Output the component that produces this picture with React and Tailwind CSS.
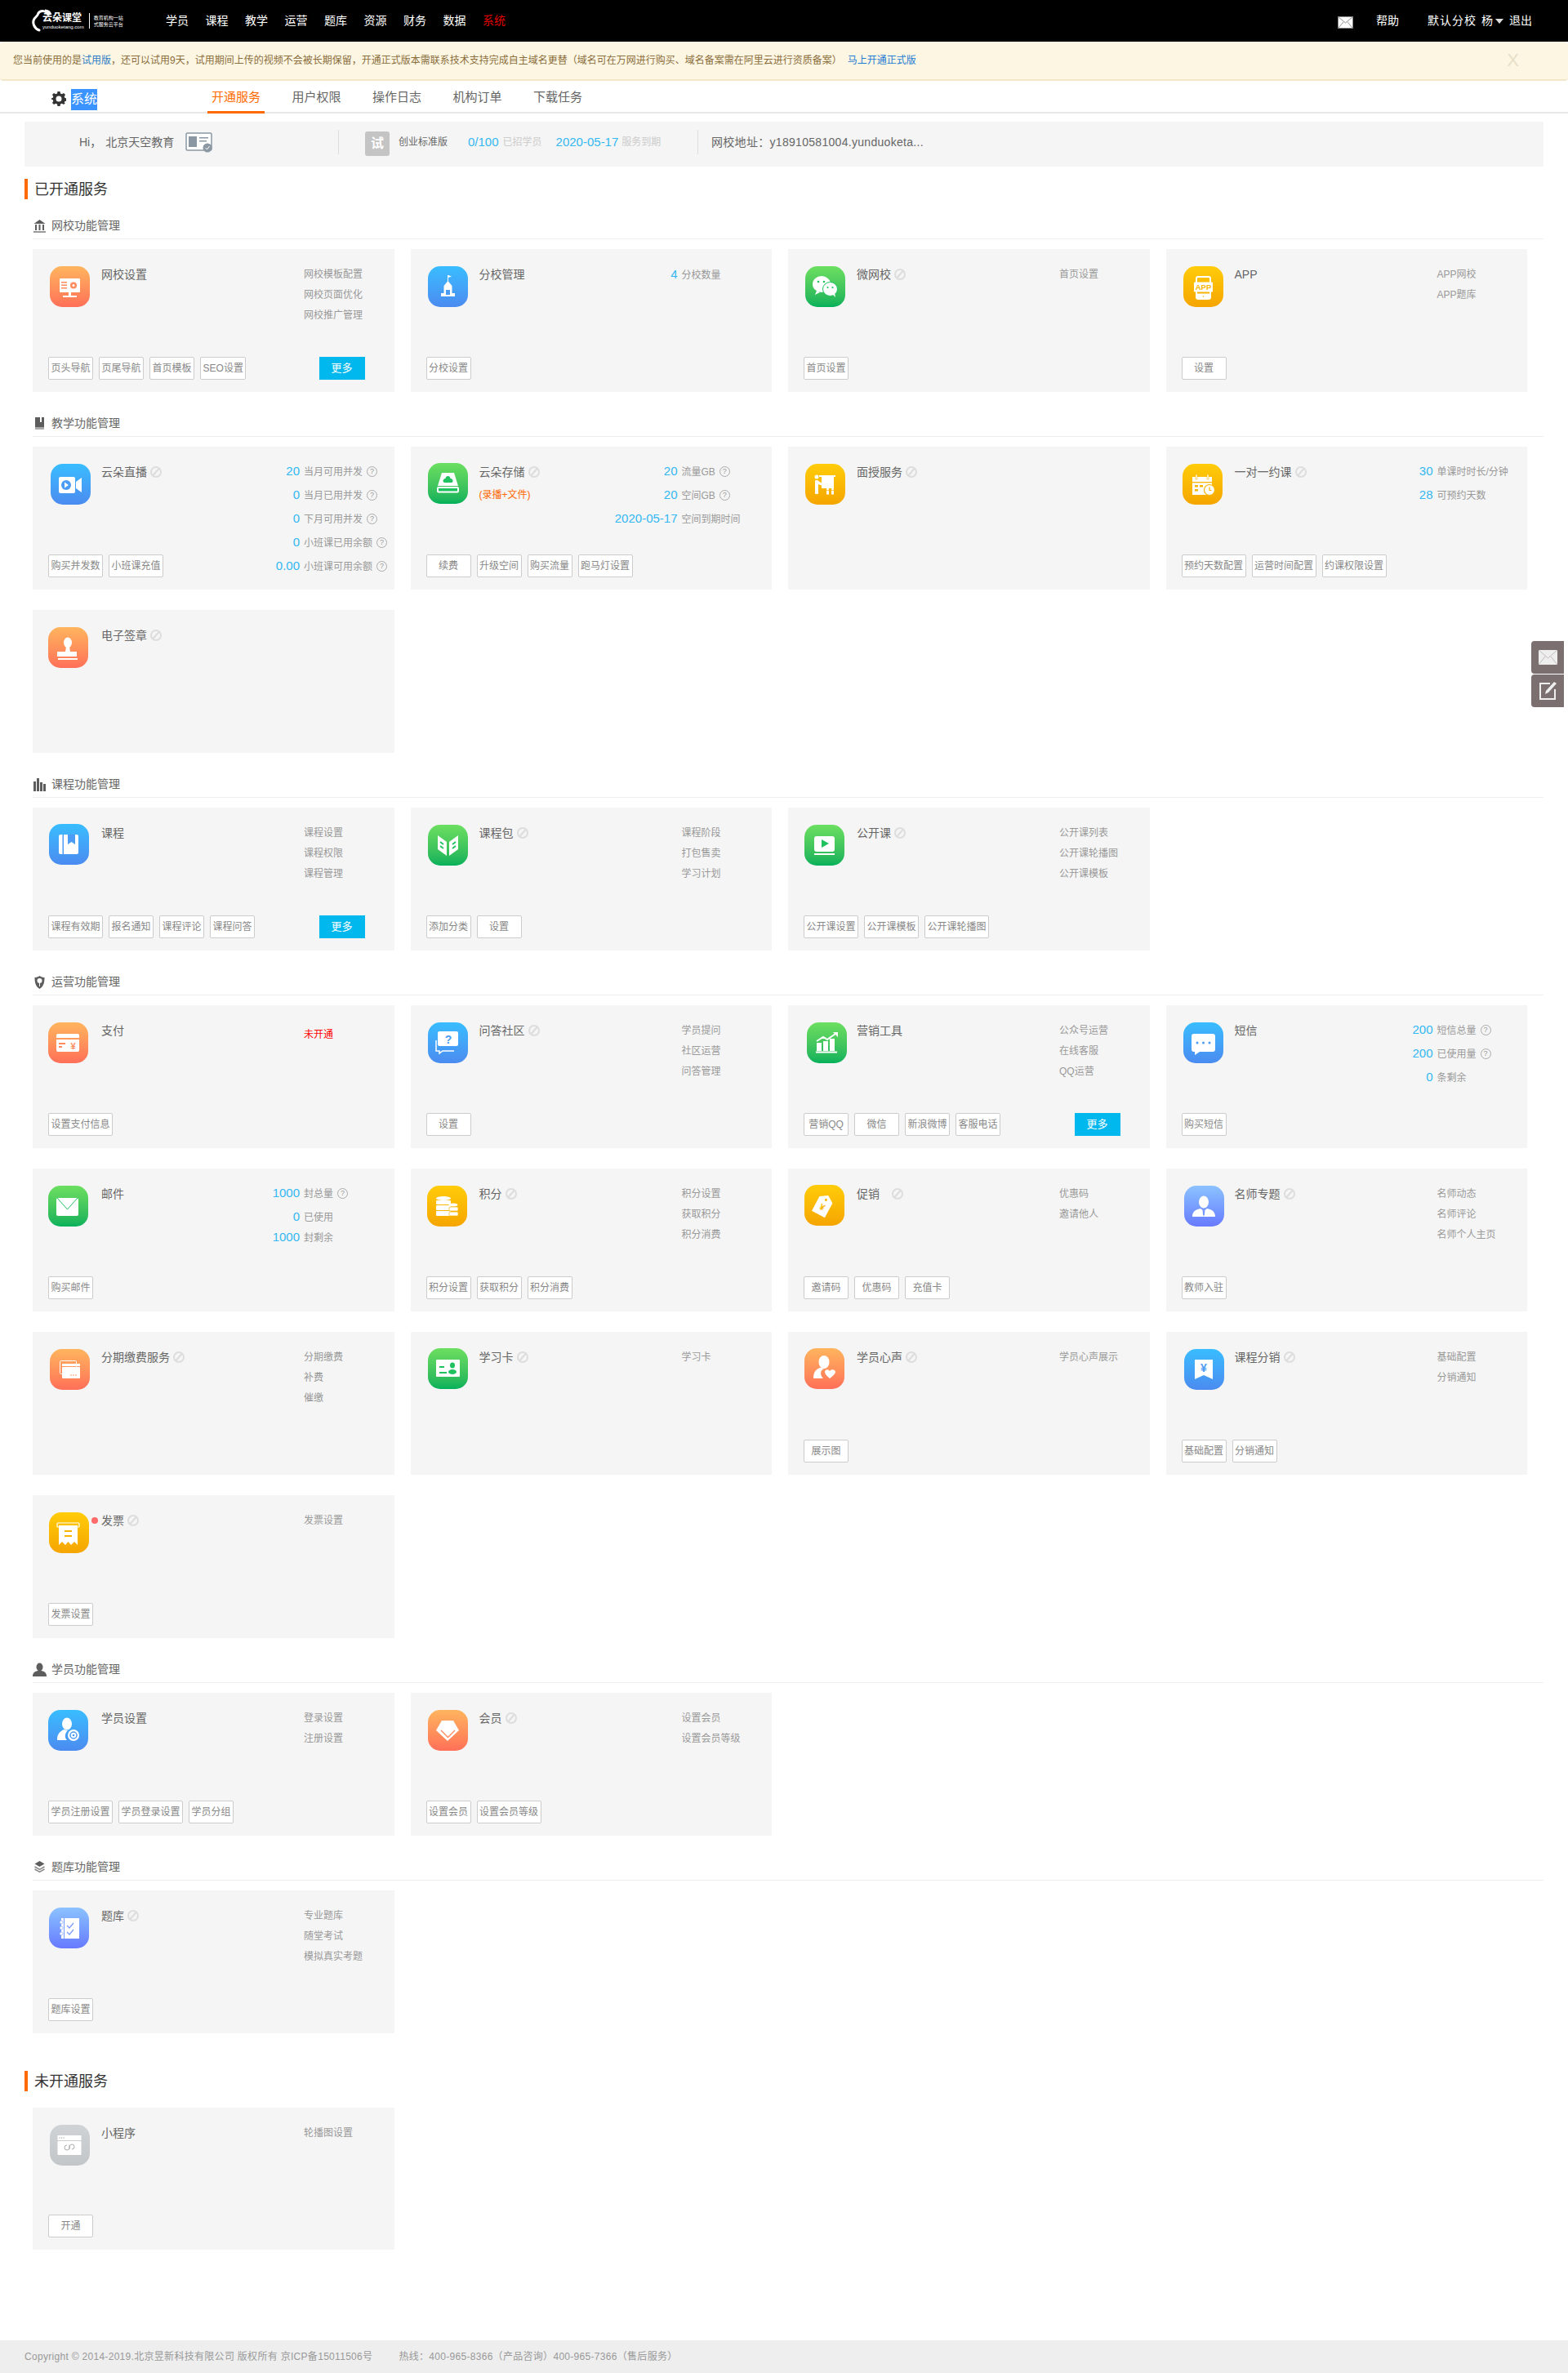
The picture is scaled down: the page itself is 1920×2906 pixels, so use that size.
import React from "react";

const GR = {
  orange: "bg-linear-to-b from-[#ffb45e] to-[#ff6f58]",
  blue: "bg-linear-to-b from-[#38bdff] to-[#4a8bf0]",
  green: "bg-linear-to-b from-[#6bdf60] to-[#00b15a]",
  yellow: "bg-linear-to-b from-[#ffcc0a] to-[#f5a500]",
  peri: "bg-linear-to-b from-[#8cc2ff] to-[#6879ff]",
  gray: "bg-linear-to-b from-[#d0d3d5] to-[#c3c6c8]",
};
const AC = { orange: "#ff8a5c", blue: "#4a9cf5", green: "#1fc25f", yellow: "#f7b500", peri: "#7a9cff", gray: "#c4c7c9" };

function Glyph({ n, a }) {
  const W = "#fff";
  switch (n) {
    case "site":
      return (<g fill={W}><rect x="12" y="15" width="25" height="17" rx="1" /><rect x="23" y="32" width="3" height="4" /><rect x="16" y="36" width="17" height="2" /><g fill={a}><rect x="14" y="19" width="7" height="1.5" /><rect x="14" y="22.5" width="7" height="1.5" /><rect x="14" y="26" width="7" height="1.5" /><circle cx="29" cy="23.5" r="4" /></g><circle cx="29" cy="23.5" r="1.5" /></g>);
    case "school":
      return (<g fill={W}><rect x="24" y="11" width="1" height="8" /><path d="M25 11l4 1.5-4 1.5z" /><path d="M24.5 18l5 6v9h3.5v4H16v-4h3.5v-9z" /><rect x="22" y="29" width="5" height="6" fill={a} /></g>);
    case "wechat":
      return (<g><ellipse cx="20" cy="22" rx="11" ry="10" fill={W} /><path d="M14 30l-2 5 6-3z" fill={W} /><circle cx="16" cy="19" r="1.3" fill={a} /><circle cx="23" cy="19" r="1.3" fill={a} /><ellipse cx="30.5" cy="28" rx="9" ry="8.5" fill={W} stroke={a} strokeWidth="1" /><path d="M34 35l3 3-1-5z" fill={W} /><circle cx="27.5" cy="26" r="1.1" fill={a} /><circle cx="33.5" cy="26" r="1.1" fill={a} /></g>);
    case "app":
      return (<g><rect x="16" y="13" width="17" height="27" rx="2" fill="none" stroke={W} strokeWidth="2" /><rect x="13" y="19.5" width="23" height="12" rx="1" fill={W} /><text x="24.5" y="29" textAnchor="middle" fontSize="9.5" fontWeight="700" fill={a} fontFamily="Liberation Sans">APP</text><rect x="16" y="33.5" width="17" height="6" fill={W} /><circle cx="24.5" cy="37" r="0.8" fill={a} /></g>);
    case "video":
      return (<g><rect x="10" y="16" width="20" height="20" rx="2" fill={W} /><circle cx="19" cy="26" r="6" fill={a} /><path d="M17 22.5l5 3.5-5 3.5z" fill={W} /><path d="M31 22l7-5v18l-7-5z" fill={W} /></g>);
    case "store":
      return (<g><path d="M17 12h15l5 16H12z" fill={W} /><path d="M24.5 16c2 0 3 1.5 3 3 2 0 3 1.5 3 3s-1 2-2 2h-8c-1 0-2-1-2-2s1-3 3-3c0-1.5 1-3 3-3z" fill={a} /><rect x="11" y="29" width="27" height="7.5" rx="2" fill={W} /><rect x="13" y="31" width="23" height="3.5" fill={a} /></g>);
    case "teach":
      return (<g fill={W}><circle cx="14" cy="16" r="2.5" /><rect x="12" y="20" width="4" height="17" rx="1" /><rect x="17" y="14" width="20" height="2" /><rect x="20" y="16" width="15" height="14" /><circle cx="27.5" cy="31" r="1.5" /><circle cx="33.5" cy="31" r="1.5" /><rect x="26" y="33" width="3" height="4.5" /><rect x="32" y="33" width="3" height="4.5" /><path d="M16 21l5 3 2-3 1 1-3 5-5-2z" /></g>);
    case "calendar":
      return (<g><rect x="12" y="16" width="24" height="22" fill={W} /><rect x="12" y="22" width="24" height="1.3" fill={a} /><rect x="16" y="13" width="2" height="6" fill={W} stroke={a} strokeWidth="0.6" /><rect x="30" y="13" width="2" height="6" fill={W} stroke={a} strokeWidth="0.6" /><rect x="15" y="26" width="4" height="2.5" fill={a} /><rect x="21" y="26" width="4" height="2.5" fill={a} /><rect x="15" y="31" width="4" height="2.5" fill={a} /><circle cx="33" cy="32" r="6.5" fill={W} stroke={a} strokeWidth="1.2" /><path d="M33 28.5v4h2.5" stroke={a} strokeWidth="1.2" fill="none" /></g>);
    case "stamp":
      return (<g fill={W}><ellipse cx="24" cy="19" rx="5" ry="6.5" /><path d="M22 24h4l1 6h-6z" /><path d="M14 30h21v6H11v-6z" /><rect x="12" y="38" width="24" height="2" /></g>);
    case "book":
      return (<g><rect x="12" y="13" width="24" height="24" rx="2" fill={W} /><rect x="16.5" y="13" width="1.5" height="24" fill={a} /><path d="M23 13h9v12l-4.5-3-4.5 3z" fill={a} /></g>);
    case "pack":
      return (<g><path d="M12 13l11 8v17l-11-8z" fill={W} /><path d="M37 13l-11 8v17l11-8z" fill={W} /><path d="M15 21l4 3M15 26l4 3M34 21l-4 3M34 26l-4 3" stroke={a} strokeWidth="1.8" /></g>);
    case "play":
      return (<g><rect x="12" y="14" width="25" height="19" rx="3" fill={W} /><path d="M21 18l9 5-9 5z" fill={a} /><rect x="12" y="35" width="25" height="2" fill={W} /></g>);
    case "pay":
      return (<g><path d="M10 16a2 2 0 012-2h24a2 2 0 012 2v3H10z" fill={W} /><path d="M10 21h28v13a2 2 0 01-2 2H12a2 2 0 01-2-2z" fill={W} /><rect x="13" y="25" width="8" height="2" fill={a} /><rect x="13" y="29" width="4" height="2" fill={a} /><text x="30.5" y="33" textAnchor="middle" fontSize="11" fontWeight="700" fill={a} fontFamily="Liberation Sans">¥</text></g>);
    case "qa":
      return (<g><path d="M10 22v13h4v3l4-3h14" fill="none" stroke={W} strokeWidth="1.5" /><path d="M14 11h21a2 2 0 012 2v14a2 2 0 01-2 2H14a2 2 0 01-2-2V13a2 2 0 012-2z" fill={W} /><text x="25" y="26" textAnchor="middle" fontSize="14" fontWeight="700" fill={a} fontFamily="Liberation Sans">?</text></g>);
    case "chart":
      return (<g><g fill={W}><rect x="12" y="25" width="6" height="10" /><rect x="20" y="23" width="6" height="12" /><rect x="28" y="20" width="6" height="15" /><rect x="11" y="35.5" width="26" height="2" /><path d="M32 12h6v6z" /></g><path d="M12 23l8-5 5 3 10-7" fill="none" stroke={W} strokeWidth="2" /></g>);
    case "sms":
      return (<g><path d="M13 14h23a3 3 0 013 3v16a3 3 0 01-3 3H20l-6 4v-4h-1a3 3 0 01-3-3V17a3 3 0 013-3z" fill={W} /><circle cx="17" cy="25" r="1.5" fill={a} /><circle cx="24.5" cy="25" r="1.5" fill={a} /><circle cx="32" cy="25" r="1.5" fill={a} /></g>);
    case "mail":
      return (<g><rect x="10" y="15" width="27" height="22" rx="2" fill={W} /><path d="M11 15l12.5 14L36 15" fill="none" stroke={a} strokeWidth="1" /></g>);
    case "coins":
      return (<g fill={W}><ellipse cx="20" cy="15.5" rx="9" ry="2.5" /><rect x="11" y="18" width="18" height="5" rx="1" /><rect x="11" y="24" width="18" height="6" rx="1" /><rect x="11" y="31" width="18" height="6" rx="1" /><ellipse cx="32" cy="23.5" rx="5.5" ry="2" /><rect x="27" y="26" width="11" height="5" rx="1" stroke={a} strokeWidth="0.7" /><rect x="27" y="32" width="11" height="5" rx="1" stroke={a} strokeWidth="0.7" /></g>);
    case "tag":
      return (<g transform="rotate(28 24 25)"><path d="M14 18l9-6 9 6v20H14z" fill={W} /><circle cx="23" cy="18" r="1.5" fill={a} /><text x="23" y="32" textAnchor="middle" fontSize="11" fontWeight="700" fill={a} fontFamily="Liberation Sans">¥</text></g>);
    case "teacher":
      return (<g><ellipse cx="24" cy="20" rx="6" ry="7.5" fill={W} /><path d="M10 38c0-7 5-9 10-10l4 3 4-3c5 1 10 3 10 10z" fill={W} /><path d="M22.5 29.5h3l-.5 6-1 2-1-2z" fill={a} /></g>);
    case "cards":
      return (<g><rect x="12.5" y="14.5" width="20" height="16" rx="1" fill="none" stroke={W} /><rect x="15" y="18" width="22" height="3" fill={W} /><rect x="15" y="22" width="22" height="14" rx="1" fill={W} /><circle cx="26" cy="32" r=".8" fill={a} /><circle cx="29" cy="32" r=".8" fill={a} /><circle cx="32" cy="32" r=".8" fill={a} /></g>);
    case "idcard":
      return (<g><rect x="10" y="14" width="29" height="21" rx="1" fill={W} /><rect x="14" y="22" width="6" height="2" fill={a} /><rect x="14" y="29" width="9" height="2" fill={a} /><ellipse cx="30" cy="21" rx="3" ry="3.5" fill={a} /><ellipse cx="30" cy="29" rx="5" ry="3" fill={a} /></g>);
    case "voice":
      return (<g fill={W}><ellipse cx="24" cy="17" rx="6.5" ry="8" /><path d="M11 37c0-8 3-11 8-13 4 0 5 1 5 1-5 2-5 8-1 12z" /><path d="M31 37c-4-3-6-6-6-8 0-3 4-4 6-1 2-3 7-2 7 1 0 2-3 5-7 8z" /></g>);
    case "ribbon":
      return (<g><path d="M13 13h22v24l-11-5-11 5z" fill={W} /><text x="24" y="28" textAnchor="middle" fontSize="14" fontWeight="700" fill={a} fontFamily="Liberation Sans">¥</text></g>);
    case "invoice":
      return (<g><rect x="10" y="13" width="27" height="5" rx="1" fill="none" stroke={W} strokeWidth="1.2" /><path d="M12 16h23v24l-4-4-4 4-3.5-4-3.5 4-4-4-4 4z" fill={W} /><rect x="19" y="22" width="9" height="2" fill={a} /><rect x="19" y="28" width="9" height="2" fill={a} /></g>);
    case "usergear":
      return (<g><ellipse cx="23" cy="17" rx="6" ry="7.5" fill={W} /><path d="M11 37c0-8 3-10 8-13l5 1c-4 4-4 9-1 12z" fill={W} /><circle cx="31" cy="31" r="7" fill={W} /><circle cx="31" cy="31" r="4" fill="none" stroke={a} strokeWidth="1.5" /><circle cx="31" cy="31" r="1.3" fill={a} /></g>);
    case "vip":
      return (<g><path d="M17 13h14l7 12-14 13-14-13z" fill={W} /><path d="M16 25l8.5 8.5L33 25" fill="none" stroke={a} strokeWidth="1.3" /></g>);
    case "exam":
      return (<g><rect x="15" y="13" width="22" height="25" fill={W} /><rect x="18" y="13" width="1" height="25" fill={a} /><circle cx="15" cy="18" r="2" fill={W} stroke={a} strokeWidth=".6" /><circle cx="15" cy="25" r="2" fill={W} stroke={a} strokeWidth=".6" /><circle cx="15" cy="32" r="2" fill={W} stroke={a} strokeWidth=".6" /><path d="M22 22l3 3 5-6M22 30l3 3 5-6" fill="none" stroke={a} strokeWidth="1.3" /></g>);
    case "mini":
      return (<g><rect x="9.5" y="13" width="29" height="6" fill={W} /><rect x="9.5" y="20" width="29" height="17" rx="1" fill={W} /><circle cx="12" cy="16" r=".7" fill="#aaa" /><circle cx="14.5" cy="16" r=".7" fill="#aaa" /><circle cx="17" cy="16" r=".7" fill="#aaa" /><path d="M24 25v3a3 3 0 11-3-3M24 30v-3a3 3 0 113 3" fill="none" stroke="#aaa" strokeWidth="1" /></g>);
    default:
      return null;
  }
}

function AppIcon({ n, c, ic }) {
  return (
    <div className={`w-[49px] h-[50px] rounded-[15px] ${GR[c]} ${ic}`}>
      <svg width="49" height="50" viewBox="0 0 49 50"><Glyph n={n} a={AC[c]} /></svg>
    </div>
  );
}

function Off() {
  return (
    <svg width="14" height="14" viewBox="0 0 14 14" className="shrink-0">
      <circle cx="7" cy="7" r="6" fill="none" stroke="#ddd" strokeWidth="2" />
      <path d="M3.5 11L10.5 3" stroke="#ddd" strokeWidth="2" />
    </svg>
  );
}
function Q() {
  return (
    <span className="ml-[5px] inline-flex w-[13px] h-[13px] items-center justify-center rounded-full border border-[#aaa] text-[9px] leading-none text-[#999]">?</span>
  );
}

function Btn({ t }) {
  return (
    <span className="inline-flex h-[28px] min-w-[55px] items-center justify-center rounded-[2px] border border-[#ccc] bg-white px-[2.5px] text-[12px] text-[#888] whitespace-nowrap">{t}</span>
  );
}

function Card({ d }) {
  const { t, off, sub, n, c, ic = "ml-[21px]", list, stats, btns = [], more, red, dot, gap } = d;
  return (
    <div className={`mr-[20px] flex flex-col bg-[#f5f5f5] pt-[21px] pb-[15px] ${d.h || "h-[175px]"}`}>
      <div className="grid h-0 flex-1 grid-cols-[84px_148px_1fr]">
        <div><AppIcon n={n} c={c} ic={ic} /></div>
        <div>
          <div className={`relative -mt-[1px] flex h-[22px] items-center text-[14px] text-[#666] whitespace-nowrap ${gap || "gap-[4px]"}`}>
            {dot && <span className="absolute left-[-12px] top-[7px] h-[8px] w-[8px] rounded-full bg-[#ff6b6b]" />}
            <span>{t}</span>
            {off && <Off />}
          </div>
          {sub && <div className="mt-[6px] h-[22px] text-[12px] leading-[22px] text-[#ff6600] whitespace-nowrap">{sub}</div>}
        </div>
        <div>
          {list && (
            <div className="-mt-[2px] pl-[100px]">
              {list.map((x) => (
                <div key={x} className="h-[25px] text-[12px] leading-[25px] text-[#999] whitespace-nowrap">{x}</div>
              ))}
            </div>
          )}
          {red && <div className="mt-[4px] pl-[100px] text-[12px] leading-[22px] text-[#f00]">{red}</div>}
          {stats && (
            <div className="-mt-[5px]">
              {stats.map((r) => (
                <div key={r[1]} className={`flex items-center whitespace-nowrap ${r[3] || "h-[29px]"}`}>
                  <span className="w-[100px] pr-[5px] text-right text-[15px] text-[#33b8f2]">{r[0]}</span>
                  <span className="text-[12px] text-[#999]">{r[1]}</span>
                  {r[2] && <Q />}
                </div>
              ))}
            </div>
          )}
        </div>
      </div>
      {btns.length > 0 && (
        <div className="flex gap-[7px] pl-[19px] pr-[36px]">
          {btns.map((b, i) => <Btn key={b + i} t={b} />)}
          {more && <span className="ml-auto flex h-[28px] w-[56px] items-center justify-center bg-[#00b7ee] text-[13px] text-white">更多</span>}
        </div>
      )}
    </div>
  );
}

const IC = "#5d5d5d";
const HeadIcons = {
  bank: (<g fill={IC}><path d="M8.5 1l7 5H1.5z" /><rect x="3" y="7" width="2" height="7" /><rect x="7.5" y="7" width="2" height="7" /><rect x="12" y="7" width="2" height="7" /><rect x="1" y="15" width="15" height="2" fill="#999" /></g>),
  book: (<g><rect x="3" y="1" width="11" height="12" fill={IC} /><rect x="9" y="1" width="2" height="6" fill="#fff" /><rect x="3" y="13" width="11" height="3" fill="#aaa" /></g>),
  books: (<g fill={IC}><rect x="1" y="5" width="3" height="12" /><rect x="5" y="1" width="3" height="16" /><rect x="9" y="6" width="3" height="11" /><rect x="13" y="8" width="3" height="9" /></g>),
  shield: (<g><path d="M8.5 1c2 1.5 4 2 6 2 0 6-1 11-6 14-5-3-6-8-6-14 2 0 4-.5 6-2z" fill={IC} /><circle cx="8.5" cy="7" r="3" fill="#fff" /><path d="M8 10h1v4H8z" fill="#fff" /></g>),
  person: (<g fill={IC}><ellipse cx="8.5" cy="5.5" rx="4" ry="5" /><path d="M0 17c0-5 3-6 6-7h5c3 1 6 2 6 7z" /></g>),
  layers: (<g><path d="M8.5 1l6 3.5-6 3.5-6-3.5z" fill={IC} /><path d="M2.5 8l6 3.5 6-3.5M2.5 11l6 3.5 6-3.5" fill="none" stroke="#888" strokeWidth="1.5" /></g>),
};

function Group({ icon, title, cards }) {
  return (
    <div className="mb-[25px] ml-[40px] w-[1850px]">
      <div className="flex h-[30px] items-center gap-[6px] border-b border-[#eee] pb-[2px] text-[14px] text-[#666]">
        <svg width="17" height="17" viewBox="0 0 17 17">{HeadIcons[icon]}</svg>
        <span>{title}</span>
      </div>
      <div className="mt-[12px] grid grid-cols-4 gap-y-[25px]">
        {cards.map((d) => <Card key={d.t} d={d} />)}
      </div>
    </div>
  );
}

function Title({ children, cls }) {
  return (
    <div className={`ml-[30px] flex h-[25px] items-center border-l-[4px] border-[#ff6a00] pl-[8px] pt-[2px] text-[18px] text-[#333] ${cls}`}>{children}</div>
  );
}

const G1 = [
  { t: "网校设置", n: "site", c: "orange", list: ["网校模板配置", "网校页面优化", "网校推广管理"], btns: ["页头导航", "页尾导航", "首页模板", "SEO设置"], more: true },
  { t: "分校管理", n: "school", c: "blue", stats: [["4", "分校数量", false, "h-[31px]"]], btns: ["分校设置"] },
  { t: "微网校", off: true, n: "wechat", c: "green", list: ["首页设置"], btns: ["首页设置"] },
  { t: "APP", n: "app", c: "yellow", list: ["APP网校", "APP题库"], btns: ["设置"] },
];
const G2 = [
  { t: "云朵直播", off: true, n: "video", c: "blue", ic: "ml-[22px]", stats: [["20", "当月可用并发", 1], ["0", "当月已用并发", 1], ["0", "下月可用并发", 1], ["0", "小班课已用余额", 1], ["0.00", "小班课可用余额", 1]], btns: ["购买并发数", "小班课充值"] },
  { t: "云朵存储", off: true, sub: "(录播+文件)", n: "store", c: "green", ic: "-mt-[1px] ml-[21px]", stats: [["20", "流量GB", 1], ["20", "空间GB", 1], ["2020-05-17", "空间到期时间"]], btns: ["续费", "升级空间", "购买流量", "跑马灯设置"] },
  { t: "面授服务", off: true, n: "teach", c: "yellow" },
  { t: "一对一约课", off: true, n: "calendar", c: "yellow", ic: "ml-[20px]", stats: [["30", "单课时时长/分钟"], ["28", "可预约天数"]], btns: ["预约天数配置", "运营时间配置", "约课权限设置"] },
  { t: "电子签章", off: true, n: "stamp", c: "orange", ic: "ml-[19px]" },
];
const G3 = [
  { t: "课程", n: "book", c: "blue", ic: "-mt-[1px] ml-[20px]", list: ["课程设置", "课程权限", "课程管理"], btns: ["课程有效期", "报名通知", "课程评论", "课程问答"], more: true },
  { t: "课程包", off: true, n: "pack", c: "green", list: ["课程阶段", "打包售卖", "学习计划"], btns: ["添加分类", "设置"] },
  { t: "公开课", off: true, n: "play", c: "green", ic: "ml-[20px]", list: ["公开课列表", "公开课轮播图", "公开课模板"], btns: ["公开课设置", "公开课模板", "公开课轮播图"] },
];
const G4 = [
  { t: "支付", n: "pay", c: "orange", ic: "ml-[19px]", red: "未开通", btns: ["设置支付信息"] },
  { t: "问答社区", off: true, n: "qa", c: "blue", list: ["学员提问", "社区运营", "问答管理"], btns: ["设置"] },
  { t: "营销工具", n: "chart", c: "green", ic: "ml-[23px]", list: ["公众号运营", "在线客服", "QQ运营"], btns: ["营销QQ", "微信", "新浪微博", "客服电话"], more: true },
  { t: "短信", n: "sms", c: "blue", stats: [["200", "短信总量", 1], ["200", "已使用量", 1], ["0", "条剩余"]], btns: ["购买短信"] },
  { t: "邮件", n: "mail", c: "green", ic: "ml-[19px]", stats: [["1000", "封总量", 1], ["0", "已使用"], ["1000", "封剩余", false, "h-[21px]"]], btns: ["购买邮件"] },
  { t: "积分", off: true, n: "coins", c: "yellow", ic: "ml-[20px]", list: ["积分设置", "获取积分", "积分消费"], btns: ["积分设置", "获取积分", "积分消费"] },
  { t: "促销", off: true, gap: "gap-[15px]", n: "tag", c: "yellow", ic: "-mt-[1px] ml-[20px]", list: ["优惠码", "邀请他人"], btns: ["邀请码", "优惠码", "充值卡"] },
  { t: "名师专题", off: true, n: "teacher", c: "peri", ic: "ml-[22px]", list: ["名师动态", "名师评论", "名师个人主页"], btns: ["教师入驻"] },
  { t: "分期缴费服务", off: true, n: "cards", c: "orange", list: ["分期缴费", "补费", "催缴"] },
  { t: "学习卡", off: true, n: "idcard", c: "green", ic: "-mt-[1px] ml-[21px]", list: ["学习卡"] },
  { t: "学员心声", off: true, n: "voice", c: "orange", ic: "-mt-[1px] ml-[20px]", list: ["学员心声展示"], btns: ["展示图"] },
  { t: "课程分销", off: true, n: "ribbon", c: "blue", ic: "ml-[22px]", list: ["基础配置", "分销通知"], btns: ["基础配置", "分销通知"] },
  { t: "发票", off: true, dot: true, n: "invoice", c: "yellow", ic: "ml-[20px]", list: ["发票设置"], btns: ["发票设置"] },
];
const G5 = [
  { t: "学员设置", n: "usergear", c: "blue", ic: "ml-[19px]", list: ["登录设置", "注册设置"], btns: ["学员注册设置", "学员登录设置", "学员分组"] },
  { t: "会员", off: true, n: "vip", c: "orange", list: ["设置会员", "设置会员等级"], btns: ["设置会员", "设置会员等级"] },
];
const G6 = [
  { t: "题库", off: true, n: "exam", c: "peri", ic: "ml-[20px]", list: ["专业题库", "随堂考试", "模拟真实考题"], btns: ["题库设置"] },
];
const NAV = ["学员", "课程", "教学", "运营", "题库", "资源", "财务", "数据"];
const TABS = ["用户权限", "操作日志", "机构订单", "下载任务"];

export default function App() {
  return (
    <div className="relative h-[2906px] w-[1920px] overflow-hidden bg-white font-['Liberation_Sans','Noto_Sans_CJK_SC',sans-serif]">
      {/* header */}
      <div className="flex h-[51px] items-center bg-black pl-[39px] pr-[44px] text-[14px] text-white">
        <div className="flex w-[164px] items-center">
          <svg width="28" height="29" viewBox="0 0 28 29" className="shrink-0">
            <path d="M20 7C18 2 11 1 8 5 7 9 5 9 3 12c-3 5 0 12 6 14" fill="none" stroke="#fff" strokeWidth="3" strokeLinecap="round" />
            <path d="M16 2c3 0 6 2 7 5" fill="none" stroke="#fff" strokeWidth="3" />
          </svg>
          <div className="-ml-[15px] flex flex-col">
            <span className="text-[12px] font-bold leading-[14px] whitespace-nowrap">云朵课堂</span>
            <span className="mt-[1px] text-[6px] leading-[7px] whitespace-nowrap">yunduoketang.com</span>
          </div>
          <div className="ml-[6px] mr-[5px] h-[19px] w-px bg-white" />
          <div className="flex flex-col text-[6px] leading-[8px] whitespace-nowrap">
            <span>教育机构一站</span>
            <span>式服务云平台</span>
          </div>
        </div>
        <div className="flex gap-[20.5px]">
          {NAV.map((x) => <span key={x}>{x}</span>)}
          <span className="text-[#e00000]">系统</span>
        </div>
        <div className="ml-auto flex items-center">
          <svg width="19" height="15" viewBox="0 0 19 15" className="mt-[3px]">
            <rect x=".5" y=".5" width="18" height="14" fill="#fff" stroke="#888" />
            <path d="M1 1l8.5 7L18 1M1 14l6-7M18 14l-6-7" fill="none" stroke="#777" strokeWidth=".8" />
          </svg>
          <span className="ml-[28px]">帮助</span>
          <span className="ml-[35px] tracking-[1px]">默认分校</span>
          <span className="ml-[6px]">杨</span>
          <span className="ml-[3px] h-0 w-0 border-x-[5px] border-t-[6px] border-x-transparent border-t-[#ddd]" />
          <span className="ml-[7px]">退出</span>
        </div>
      </div>

      {/* banner */}
      <div className="flex h-[48px] items-center rounded-[4px] border-b-2 border-[#f4e6c8] bg-[#fdf6e3] pl-[16px] text-[12px] text-[#8a6d3b]">
        <span>您当前使用的是<span className="text-[#2a7ac4]">试用版</span>，还可以试用9天，试用期间上传的视频不会被长期保留，开通正式版本需联系技术支持完成自主域名更替（域名可在万网进行购买、域名备案需在阿里云进行资质备案）</span>
        <span className="ml-[7px] text-[#1e7ad2]">马上开通正式版</span>
        <span className="ml-auto mr-[60px] text-[22px] leading-none text-[#e6e0c8]">X</span>
      </div>

      {/* tabs */}
      <div className="flex h-[40px] items-stretch border-b-2 border-[#e8e8e8]">
        <div className="ml-[63px] flex w-[191px] items-start pt-[10px]">
          <svg width="18" height="18" viewBox="0 0 18 18" className="mt-[3px]">
            <path fillRule="evenodd" fill="#333" d="M7.5 0h3l.5 2.5 1.8.8L15 2l2 2-1.3 2.2.8 1.8 2.5.5v3l-2.5.5-.8 1.8L17 14l-2 2-2.2-1.3-1.8.8-.5 2.5h-3L7 15.5l-1.8-.8L3 16l-2-2 1.3-2.2-.8-1.8L-1 9.5v-1l2.5-.5.8-1.8L1 4l2-2 2.2 1.3L7 2.5zM9 5.500a3.500 3.500 0 100 7 3.500 3.500 0 000-7z" />
          </svg>
          <span className="ml-[6px] flex h-[26px] w-[32px] items-center justify-center bg-[#3b93ff] text-[16px] leading-none whitespace-nowrap text-white">系统</span>
        </div>
        <div className="flex gap-[28.5px] text-[15px] text-[#666]">
          <span className="-mb-[2px] flex w-[70px] items-start justify-center border-b-[3px] border-[#ff6a00] pt-[9px] text-[#ff6a00]">开通服务</span>
          {TABS.map((x) => <span key={x} className="w-[70px] pt-[9px] text-center">{x}</span>)}
        </div>
      </div>

      {/* info bar */}
      <div className="ml-[30px] mt-[10px] flex h-[55px] w-[1860px] items-start bg-[#f5f5f5] pt-[10px]">
        <div className="flex h-[30px] w-[385px] items-center border-r border-[#ddd] pl-[67px] text-[14px] text-[#666]">
          <span>Hi，</span>
          <span className="ml-[5px]">北京天空教育</span>
          <svg width="33" height="25" viewBox="0 0 33 25" className="ml-[14px]">
            <rect x="1" y="1" width="31" height="21" rx="1.5" fill="#fff" stroke="#8b98a3" strokeWidth="1.5" />
            <rect x="4" y="5" width="10" height="13" fill="#8b98a3" />
            <rect x="17" y="6" width="11" height="1.5" fill="#8b98a3" />
            <rect x="17" y="10" width="9" height="1.5" fill="#8b98a3" />
            <circle cx="27" cy="19" r="5.5" fill="#8b98a3" />
            <path d="M24.5 19l2 2 3-4" fill="none" stroke="#fff" strokeWidth="1" />
          </svg>
        </div>
        <div className="flex h-[30px] w-[440px] items-center border-r border-[#ddd] pl-[32px] whitespace-nowrap">
          <span className="mt-[4px] flex h-[30px] w-[30px] items-center justify-center rounded-[3px] bg-[#c4c4c4] text-[16px] font-bold text-white">试</span>
          <span className="ml-[11px] text-[12px] text-[#666]">创业标准版</span>
          <span className="ml-[25px] text-[15px] text-[#33b8f2]">0/100</span>
          <span className="ml-[5px] text-[12px] text-[#ccc]">已招学员</span>
          <span className="ml-[17px] text-[15px] text-[#33b8f2]">2020-05-17</span>
          <span className="ml-[4px] text-[12px] text-[#ccc]">服务到期</span>
        </div>
        <div className="flex h-[30px] items-center pl-[16px] text-[14px] tracking-[0.3px] text-[#666] whitespace-nowrap">网校地址：y18910581004.yunduoketa...</div>
      </div>

      <Title cls="mt-[15px] mb-[19px]">已开通服务</Title>
      <Group icon="bank" title="网校功能管理" cards={G1} />
      <Group icon="book" title="教学功能管理" cards={G2} />
      <Group icon="books" title="课程功能管理" cards={G3} />
      <Group icon="shield" title="运营功能管理" cards={G4} />
      <Group icon="person" title="学员功能管理" cards={G5} />
      <Group icon="layers" title="题库功能管理" cards={G6} />

      <Title cls="mt-[46px] mb-[20px]">未开通服务</Title>
      <div className="ml-[40px] grid w-[1850px] grid-cols-4">
        <Card d={{ t: "小程序", n: "mini", c: "gray", list: ["轮播图设置"], btns: ["开通"], h: "h-[174px]" }} />
      </div>

      {/* footer */}
      <div className="absolute inset-x-0 bottom-0 flex h-[40px] items-center bg-[#eeeeee] pl-[30px] text-[12px] tracking-[0.3px] text-[#999] whitespace-nowrap">
        <span>Copyright © 2014-2019.北京昱新科技有限公司 版权所有 京ICP备15011506号</span>
        <span className="ml-[32px]">热线：400-965-8366（产品咨询）400-965-7366（售后服务）</span>
      </div>

      {/* floating */}
      <div className="absolute right-[5px] top-[785px] flex w-[40px] flex-col gap-px">
        <div className="flex h-[40px] items-center justify-center rounded-l-[4px] bg-[#7b6f6f]">
          <svg width="23" height="18" viewBox="0 0 23 18"><rect width="23" height="18" fill="#eee" /><path d="M0 0l11.5 10L23 0M0 18l8-10M23 18l-8-10" fill="none" stroke="#b5aeae" strokeWidth=".8" /></svg>
        </div>
        <div className="flex h-[40px] items-center justify-center rounded-l-[4px] bg-[#7b6f6f]">
          <svg width="24" height="24" viewBox="0 0 24 24" fill="none" stroke="#eee" strokeWidth="2"><path d="M15 3H3v19h18V10" /><path d="M9 16l1-4L20 1l3 2-10 11z" fill="#eee" stroke="none" /></svg>
        </div>
      </div>
    </div>
  );
}
